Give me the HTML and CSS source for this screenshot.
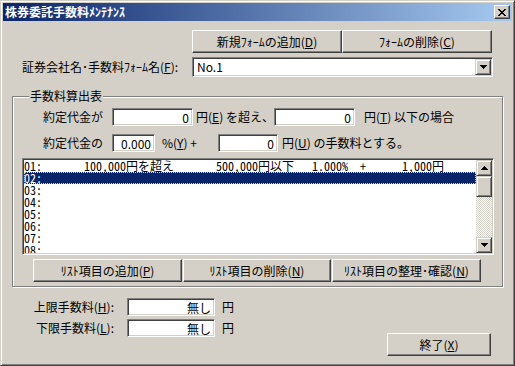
FILE: index.html
```html
<!DOCTYPE html>
<html lang="ja">
<head>
    <meta charset="UTF-8">
    <title>株券委託手数料ﾒﾝﾃﾅﾝｽ</title>
    <link rel="stylesheet" href="styles.css">
</head>
<body>
    <div class="window">
        <div class="titlebar">
            <span class="title">株券委託手数料ﾒﾝﾃﾅﾝｽ</span>
            <button class="close-btn" title="閉じる">
                <svg width="8" height="7" viewBox="0 0 8 7" shape-rendering="crispEdges">
                    <path d="M0 0h2v1h-2zM6 0h2v1h-2zM1 1h2v1h-2zM5 1h2v1h-2zM2 2h4v1h-4zM3 3h2v1h-2zM2 4h4v1h-4zM1 5h2v1h-2zM5 5h2v1h-2zM0 6h2v1h-2zM6 6h2v1h-2z" fill="#000"/>
                </svg>
            </button>
        </div>

        <div class="dialog">
            <!-- form buttons -->
            <div class="form-actions">
                <button class="btn btn-form">新規ﾌｫｰﾑの追加(<u>D</u>)</button>
                <button class="btn btn-form">ﾌｫｰﾑの削除(<u>C</u>)</button>
            </div>

            <div class="form-row">
                <label class="form-label">証券会社名･手数料ﾌｫｰﾑ名(<u>F</u>):</label>
                <div class="combo">
                    <span class="combo-value">No.1</span>
                    <span class="combo-btn">
                        <svg width="7" height="4" viewBox="0 0 7 4" shape-rendering="crispEdges">
                            <path d="M0 0h7v1h-7zM1 1h5v1h-5zM2 2h3v1h-3zM3 3h1v1h-1z" fill="#000"/>
                        </svg>
                    </span>
                </div>
            </div>

            <!-- fee table -->
            <fieldset class="group">
                <legend>手数料算出表</legend>

                <div class="calc-row">
                    <span class="calc-label">約定代金が</span>
                    <input class="field field-amount" value="0" readonly>
                    <span class="calc-text t-over">円(<u>E</u>) を超え、</span>
                    <input class="field field-amount" value="0" readonly>
                    <span class="calc-text t-under">円(<u>T</u>) 以下の場合</span>
                </div>

                <div class="calc-row calc-row-second">
                    <span class="calc-label">約定代金の</span>
                    <input class="field field-rate" value="0.000" readonly>
                    <span class="calc-text t-rate">%(<u>Y</u>) +</span>
                    <input class="field field-fee" value="0" readonly>
                    <span class="calc-text t-fee">円(<u>U</u>) の手数料とする。</span>
                </div>

                <div class="listbox">
                    <ul class="list-items">
                        <li>01:       100,000円を超え       500,000円以下   1.000%  +      1,000円</li>
                        <li class="selected">02:</li>
                        <li>03:</li>
                        <li>04:</li>
                        <li>05:</li>
                        <li>06:</li>
                        <li>07:</li>
                        <li>08:</li>
                    </ul>
                    <div class="scrollbar">
                        <span class="scroll-btn">
                            <svg width="7" height="4" viewBox="0 0 7 4" shape-rendering="crispEdges">
                                <path d="M3 0h1v1h-1zM2 1h3v1h-3zM1 2h5v1h-5zM0 3h7v1h-7z" fill="#000"/>
                            </svg>
                        </span>
                        <span class="scroll-thumb"></span>
                        <span class="scroll-track"></span>
                        <span class="scroll-btn">
                            <svg width="7" height="4" viewBox="0 0 7 4" shape-rendering="crispEdges">
                                <path d="M0 0h7v1h-7zM1 1h5v1h-5zM2 2h3v1h-3zM3 3h1v1h-1z" fill="#000"/>
                            </svg>
                        </span>
                    </div>
                </div>

                <div class="list-actions">
                    <button class="btn btn-list">ﾘｽﾄ項目の追加(<u>P</u>)</button>
                    <button class="btn btn-list btn-list-mid">ﾘｽﾄ項目の削除(<u>N</u>)</button>
                    <button class="btn btn-list">ﾘｽﾄ項目の整理･確認(<u>N</u>)</button>
                </div>
            </fieldset>

            <!-- limits and exit -->
            <div class="footer">
                <div class="limits">
                    <div class="limit-row">
                        <label class="limit-label">上限手数料(<u>H</u>):</label>
                        <input class="field field-limit" value="無し" readonly>
                        <span class="limit-unit">円</span>
                    </div>
                    <div class="limit-row">
                        <label class="limit-label">下限手数料(<u>L</u>):</label>
                        <input class="field field-limit" value="無し" readonly>
                        <span class="limit-unit">円</span>
                    </div>
                </div>
                <button class="btn btn-exit">終了(<u>X</u>)</button>
            </div>
        </div>
    </div>
</body>
</html>
```

FILE: styles.css
```css
* {
    box-sizing: border-box;
    margin: 0;
    padding: 0;
}

body {
    font-family: "Noto Sans CJK JP", sans-serif;
    font-size: 12px;
    line-height: 14px;
    color: #000;
    background-color: #d4d0c8;
}

u {
    text-underline-offset: 1px;
}

/* Window frame */
.window {
    width: 515px;
    height: 366px;
    display: flex;
    flex-direction: column;
    padding: 2px;
    border: 1px solid;
    border-color: #d4d0c8 #404040 #404040 #d4d0c8;
    box-shadow: inset 1px 1px #fff, inset -1px -1px #808080;
    background-color: #d4d0c8;
}

.titlebar {
    height: 18px;
    display: flex;
    align-items: center;
    padding: 0 2px;
    background: linear-gradient(to right, #0a246a, #a6caf0);
}

.title {
    color: #fff;
    font-weight: bold;
    line-height: 18px;
}

.close-btn {
    margin-left: auto;
    width: 16px;
    height: 14px;
    display: flex;
    align-items: center;
    justify-content: center;
    background-color: #d4d0c8;
    border: 1px solid;
    border-color: #fff #404040 #404040 #fff;
    box-shadow: inset -1px -1px #808080;
}

/* Dialog body */
.dialog {
    flex: 1;
    padding: 0 9px;
}

.btn {
    height: 23px;
    font-family: inherit;
    font-size: 12px;
    line-height: 14px;
    color: #000;
    background-color: #d4d0c8;
    border: 1px solid;
    border-color: #fff #404040 #404040 #fff;
    box-shadow: inset -1px -1px #808080;
}

.form-actions {
    display: flex;
    justify-content: flex-end;
    margin-top: 9px;
    padding-right: 11px;
}

.btn-form {
    width: 150px;
}

.form-row {
    display: flex;
    align-items: center;
    height: 20px;
    margin-top: 4px;
    padding: 0 10px;
}

.combo {
    margin-left: auto;
    width: 301px;
    height: 20px;
    display: flex;
    align-items: center;
    padding: 1px;
    background-color: #fff;
    border: 1px solid;
    border-color: #808080 #fff #fff #808080;
    box-shadow: inset 1px 1px #404040, inset -1px -1px #d4d0c8;
}

.combo-value {
    flex: 1;
    padding-left: 3px;
}

.combo-btn,
.scroll-btn {
    width: 16px;
    height: 16px;
    display: flex;
    align-items: center;
    justify-content: center;
    background-color: #d4d0c8;
    border: 1px solid;
    border-color: #d4d0c8 #404040 #404040 #d4d0c8;
    box-shadow: inset 1px 1px #fff, inset -1px -1px #808080;
}

/* Group box */
.group {
    margin-top: 12px;
    padding: 5px 10px 4px 9px;
    border: 1px solid #808080;
    box-shadow: inset 1px 1px #fff, 1px 1px #fff;
    min-width: 0;
}

.group legend {
    margin-left: 7px;
    padding: 0 1px;
    line-height: 14px;
    background-color: #d4d0c8;
}

.calc-row {
    display: flex;
    align-items: center;
    height: 18px;
    padding-left: 21px;
    white-space: nowrap;
}

.calc-row-second {
    margin-top: 8px;
}

.calc-label {
    width: 69px;
}

.field {
    height: 18px;
    padding: 0 3px;
    font-family: inherit;
    font-size: 12px;
    line-height: 14px;
    color: #000;
    text-align: right;
    background-color: #fff;
    border: 1px solid;
    border-color: #808080 #fff #fff #808080;
    box-shadow: inset 1px 1px #404040, inset -1px -1px #d4d0c8;
    outline: none;
}

.field-amount {
    width: 81px;
}

.field-rate {
    width: 43px;
}

.field-fee {
    width: 60px;
}

.t-over {
    width: 81px;
    padding-left: 3px;
}

.t-under {
    padding-left: 9px;
}

.t-rate {
    width: 63px;
    padding-left: 7px;
}

.t-fee {
    padding-left: 4px;
}

/* List box */
.listbox {
    margin-top: 6px;
    width: 472px;
    height: 97px;
    display: flex;
    background-color: #fff;
    border: 1px solid;
    border-color: #808080 #fff #fff #808080;
    box-shadow: inset 1px 1px #404040, inset -1px -1px #d4d0c8;
    padding: 1px;
}

.list-items {
    flex: 1;
    list-style: none;
    overflow: hidden;
    font-family: "Noto Sans Mono CJK JP", "Noto Sans CJK JP", monospace;
    line-height: 12px;
}

.list-items li {
    height: 12px;
    white-space: pre;
}

.list-items .selected {
    color: #fff;
    background-color: #0a246a;
    outline: 1px dotted #e8dc8c;
    outline-offset: -1px;
}

.scrollbar {
    width: 16px;
    display: flex;
    flex-direction: column;
}

.scroll-thumb {
    height: 21px;
    background-color: #d4d0c8;
    border: 1px solid;
    border-color: #d4d0c8 #404040 #404040 #d4d0c8;
    box-shadow: inset 1px 1px #fff, inset -1px -1px #808080;
}

.scroll-track {
    flex: 1;
    background-color: #fff;
    background-image: repeating-conic-gradient(#d4d0c8 0 25%, #fff 0 50%);
    background-size: 2px 2px;
}

.list-actions {
    display: flex;
    gap: 1px;
    margin-top: 4px;
    padding-left: 11px;
}

.btn-list {
    width: 149px;
}

.btn-list-mid {
    width: 148px;
}

/* Footer */
.footer {
    display: flex;
    margin-top: 11px;
}

.limits {
    display: flex;
    flex-direction: column;
    gap: 3px;
}

.limit-row {
    display: flex;
    align-items: center;
    height: 18px;
}

.limit-label {
    width: 102px;
    text-align: right;
}

.field-limit {
    width: 88px;
    margin-left: 13px;
}

.limit-unit {
    margin-left: 7px;
}

.btn-exit {
    width: 104px;
    margin-left: auto;
    margin-top: 35px;
    margin-right: 12px;
}
```
